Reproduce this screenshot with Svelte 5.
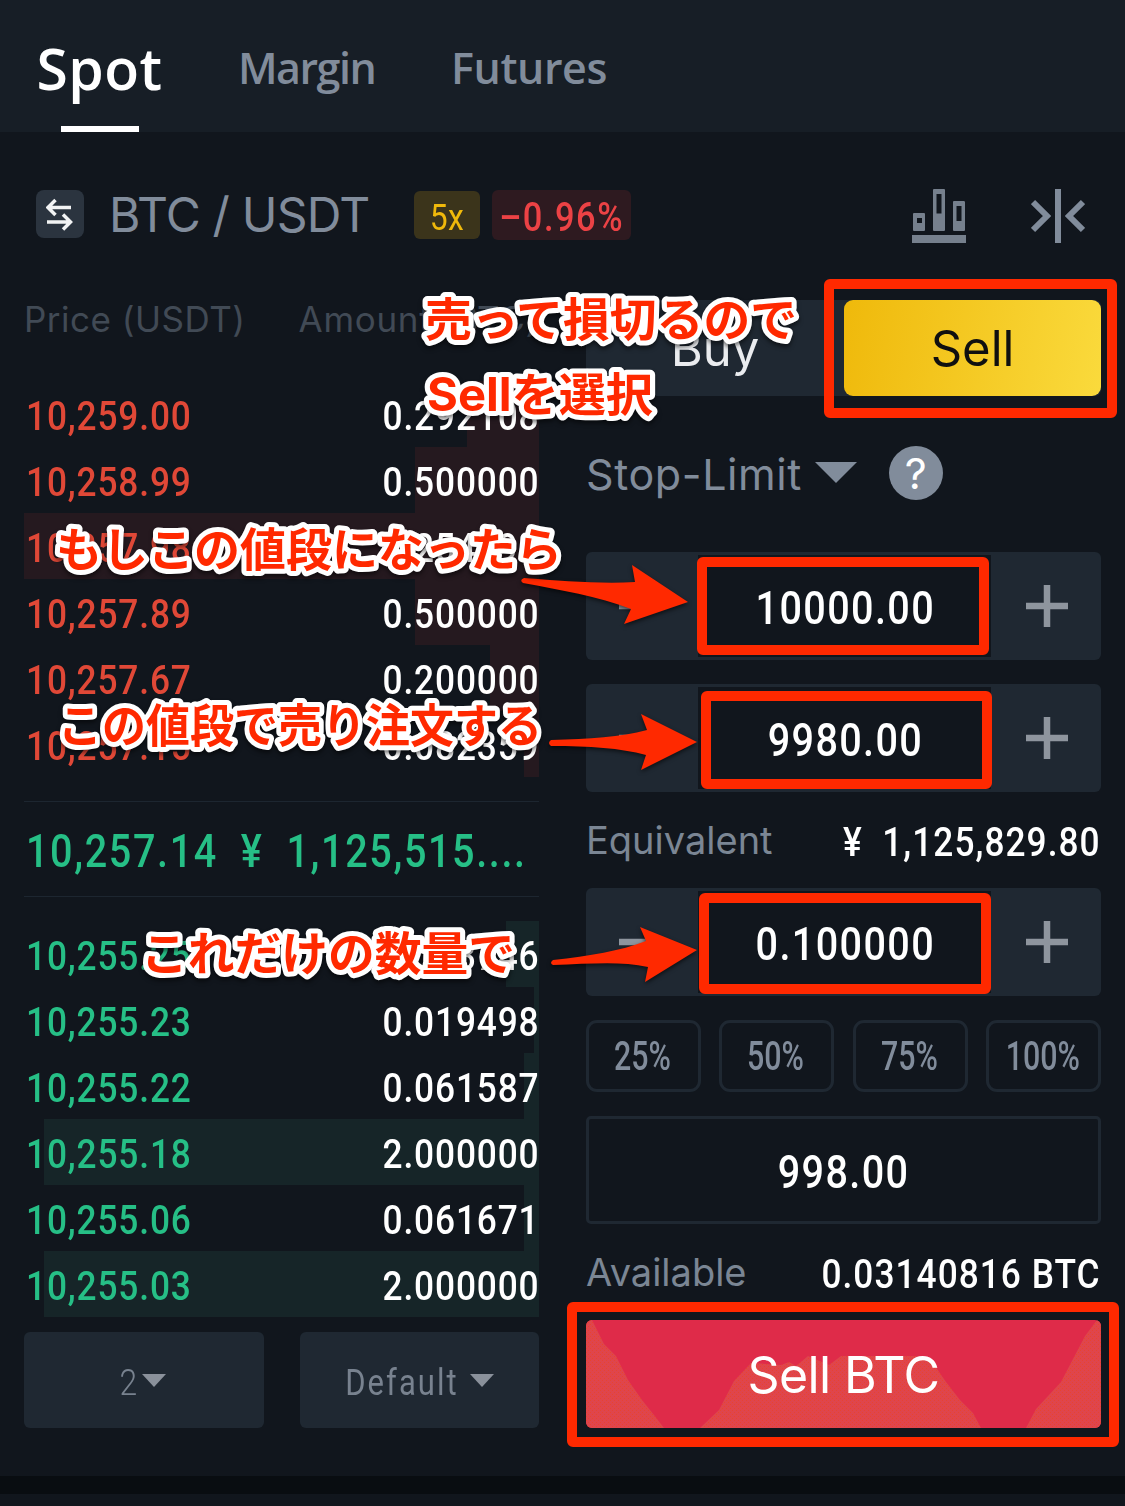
<script lang="ts">
interface Order {
  price: string;
  amount: string;
  depth: number;
}

const asks: Order[] = [
  { price: "10,259.00", amount: "0.292108", depth: 14 },
  { price: "10,258.99", amount: "0.500000", depth: 24.1 },
  { price: "10,257.98", amount: "2.254491", depth: 100 },
  { price: "10,257.89", amount: "0.500000", depth: 24.1 },
  { price: "10,257.67", amount: "0.200000", depth: 9.5 },
  { price: "10,257.15", amount: "0.082359", depth: 2.9 },
];

const bids: Order[] = [
  { price: "10,255.25", amount: "0.133746", depth: 6.4 },
  { price: "10,255.23", amount: "0.019498", depth: 1 },
  { price: "10,255.22", amount: "0.061587", depth: 2.9 },
  { price: "10,255.18", amount: "2.000000", depth: 96.1 },
  { price: "10,255.06", amount: "0.061671", depth: 2.9 },
  { price: "10,255.03", amount: "2.000000", depth: 96.1 },
];

const percents = ["25%", "50%", "75%", "100%"];

let stopPrice = $state("10000.00");
let limitPrice = $state("9980.00");
let quantity = $state("0.100000");

const notes = [
  { text: "売って損切るので", x: 425, y: 336, width: 372 },
  { text: "Sellを選択", x: 427, y: 411, width: 226 },
  { text: "もしこの値段になったら", x: 56, y: 566, width: 506 },
  { text: "この値段で売り注文する", x: 58, y: 742, width: 484 },
  { text: "これだけの数量で", x: 141, y: 970, width: 374 },
];

const frames = [
  { x: 829, y: 284, w: 283, h: 129 },
  { x: 702, y: 562, w: 282, h: 88 },
  { x: 706, y: 696, w: 281, h: 88 },
  { x: 704, y: 898, w: 282, h: 91 },
  { x: 572, y: 1307, w: 542, h: 135 },
];

const arrows = [
  "M524 578C562 581 602 584 635 582L632 565L688 602L624 624L631 609C598 596 560 590 523 583Q519 580 524 578Z",
  "M551 740C590 739 620 737 647 730L641 714L697 742L641 770L646 755C620 748 590 746 551 746Q547 743 551 740Z",
  "M553 960C590 956 620 951 646 941L640 927L697 950L645 982L648 967C620 961 590 964 553 965Q549 963 553 960Z",
];
</script>

{#snippet orders(list: Order[], side: string)}
  <div class="orders {side}">
    {#each list as order (order.price)}
      <div class="order">
        <div class="depth" style="width: {order.depth}%"></div>
        <span class="num price">{order.price}</span>
        <span class="num amount">{order.amount}</span>
      </div>
    {/each}
  </div>
{/snippet}

{#snippet stepper(value: string)}
  <div class="stepper">
    <button class="step" aria-label="minus">
      <svg width="42" height="42"><path d="M0 21H42" /></svg>
    </button>
    <div class="value"><span class="num">{value}</span></div>
    <button class="step" aria-label="plus">
      <svg width="42" height="42"><path d="M0 21H42M21 0V42" /></svg>
    </button>
  </div>
{/snippet}

<main class="screen">
  <nav class="tabs">
    <span class="tab active">Spot</span>
    <span class="tab margin">Margin</span>
    <span class="tab futures">Futures</span>
  </nav>

  <header class="pair">
    <span class="swap">
      <svg width="28" height="38" viewBox="0 0 28 38">
        <path d="M25 12.500H2M9.500 5L2 12.500L9.500 20M1 27H25M17 19.500L24.500 27L17 34.500" />
      </svg>
    </span>
    <span class="pair-name">BTC / USDT</span>
    <span class="leverage"><span class="num">5x</span></span>
    <span class="change"><span class="num">–0.96%</span></span>
    <svg class="chart-icon" width="54" height="54" viewBox="0 0 54 54">
      <path
        fill-rule="evenodd"
        d="M0 46H54V54H0ZM3 24H12Q13 24 13 25V41Q13 42 12 42H2Q1 42 1 41V25Q1 24 2 24ZM5 29V34H10V29ZM22 0H32Q33 0 33 1V41Q33 42 32 42H22Q21 42 21 41V1Q21 0 22 0ZM24.500 5V24.500H29.500V5ZM42 12H51.500Q53 12 53 13V41Q53 42 52 42H42Q41 42 41 41V13Q41 12 42 12ZM44.500 17V32H49.500V17Z"
      />
    </svg>
    <svg class="collapse-icon" width="54" height="54" viewBox="0 0 54 54">
      <path d="M27 0V54M2 13L16 27L2 41M52 13L38 27L52 41" />
    </svg>
  </header>

  <div class="columns">
    <section class="book">
      <div class="book-head">
        <span>Price (USDT)</span>
        <span>Amount (BTC)</span>
      </div>
      {@render orders(asks, "ask")}
      <div class="last"><span class="num">10,257.14&nbsp; ¥&nbsp; 1,125,515....</span></div>
      {@render orders(bids, "bid")}
      <div class="selects">
        <button class="select"><span class="num">2</span><i class="caret"></i></button>
        <button class="select"><span class="num default">Default</span><i class="caret"></i></button>
      </div>
    </section>

    <section class="form">
      <div class="sides">
        <button class="buy">Buy</button>
        <button class="sell">Sell</button>
      </div>
      <div class="type">
        <span>Stop-Limit</span>
        <i class="caret big"></i>
        <span class="help"><span>?</span></span>
      </div>
      {@render stepper(stopPrice)}
      {@render stepper(limitPrice)}
      <div class="info equivalent">
        <span>Equivalent</span>
        <span class="num">¥&nbsp; 1,125,829.80</span>
      </div>
      {@render stepper(quantity)}
      <div class="percents">
        {#each percents as percent (percent)}
          <button class="percent"><span class="num">{percent}</span></button>
        {/each}
      </div>
      <div class="total"><span class="num">998.00</span></div>
      <div class="info available">
        <span>Available</span>
        <span class="num">0.03140816 BTC</span>
      </div>
      <button class="submit">
        <svg width="515" height="108" viewBox="0 0 515 108">
          <defs>
            <pattern id="dots" width="4" height="4" patternUnits="userSpaceOnUse">
              <rect width="4" height="4" fill="#df454c" />
              <path d="M0 0H1V1H0ZM2 2H3V3H2Z" fill="#e8432f" />
            </pattern>
          </defs>
          <path
            fill="url(#dots)"
            d="M0 0H6L18 24L30 36L42 60L56 80L68 95L78 108H0ZM114 108L133 90L148 61L165 43L195 45L203 42L210 46L222 36L243 45L255 36L330 36L347 43L360 62L374 80L387 93L395 108ZM440 108L450 89L475 62L499 16L511 0H515V108Z"
          />
        </svg>
        <span>Sell BTC</span>
      </button>
    </section>
  </div>

  <footer class="divider"></footer>

  <svg class="annotations" width="1125" height="1506" viewBox="0 0 1125 1506">
    {#each frames as f}
      <rect x={f.x} y={f.y} width={f.w} height={f.h} rx="1" />
    {/each}
    {#each arrows as d}
      <path {d} />
    {/each}
    {#each notes as note}
      <text x={note.x} y={note.y} textLength={note.width} lengthAdjust="spacingAndGlyphs">{note.text}</text>
    {/each}
  </svg>
</main>

<style>
:global(body) {
  background: #11161d;
}

.screen {
  position: relative;
  box-sizing: border-box;
  width: 1125px;
  height: 1506px;
  overflow: hidden;
  background: #11161d;
  color: #fff;
  font-family: Inter, "Noto Sans CJK JP", sans-serif;
}

.screen :global(*) {
  box-sizing: border-box;
}

button {
  border: 0;
  padding: 0;
  background: none;
  color: inherit;
  font: inherit;
}

svg {
  display: block;
  flex: none;
}

.num {
  display: inline-block;
  font-family: Roboto, sans-serif;
  font-size: 41px;
  font-weight: 500;
  letter-spacing: 1.2px;
  white-space: nowrap;
  transform: scaleX(0.86);
}

.tabs {
  display: flex;
  height: 132px;
  padding-left: 37px;
  background: #171e26;
  color: #818c9b;
  font-family: "Open Sans", sans-serif;
  font-weight: 600;
}

.tab {
  font-size: 43px;
  line-height: 135px;
  white-space: nowrap;
}

.tab.active {
  display: flex;
  flex-direction: column;
  align-items: center;
  width: 125px;
  height: 132px;
  padding-top: 10px;
  color: #fff;
  font-size: 57px;
  letter-spacing: 0.5px;
  line-height: 116px;
}

.tab.active::after {
  content: "";
  width: 78px;
  height: 6px;
  background: #fff;
}

.tab.margin {
  width: 213px;
  margin-left: 76px;
  letter-spacing: -1.5px;
}

.tab.futures {
  letter-spacing: -0.4px;
}

.pair {
  display: flex;
  align-items: center;
  height: 168px;
  padding: 0 40px 0 36px;
}

.swap {
  display: grid;
  place-items: center;
  width: 48px;
  height: 48px;
  margin-bottom: 4px;
  border-radius: 8px;
  background: #2b343f;
}

.swap path {
  fill: none;
  stroke: #f2f3f4;
  stroke-width: 3.5;
}

.pair-name {
  width: 305px;
  margin: 0 0 3px 25px;
  color: #818c9b;
  font-size: 48px;
  letter-spacing: -0.8px;
  white-space: nowrap;
}

.leverage,
.change {
  display: grid;
  place-items: center;
  width: 66px;
  height: 48px;
  margin-bottom: 2px;
  padding-top: 4px;
  border-radius: 6px;
  background: #3b341b;
  color: #f0b90b;
}

.leverage .num {
  font-size: 37px;
  font-weight: 400;
  letter-spacing: 0.5px;
}

.change {
  width: 139px;
  height: 50px;
  margin-left: 12px;
  background: #2e1a20;
  color: #ec4245;
}

.change .num {
  margin: 0 -10px;
  font-size: 40px;
  font-weight: 500;
  letter-spacing: 1.8px;
}

.chart-icon {
  margin-left: auto;
}

.chart-icon path {
  fill: #76808d;
}

.collapse-icon {
  margin-left: 65px;
}

.collapse-icon path {
  fill: none;
  stroke: #818c9b;
  stroke-width: 6;
}

.columns {
  display: grid;
  grid-template-columns: 515px 515px;
  gap: 47px;
  height: 1176px;
  padding: 0 24px;
}

.book-head {
  display: flex;
  justify-content: space-between;
  height: 81px;
  color: #414a55;
  font-size: 35px;
  line-height: 38px;
  letter-spacing: 0.5px;
}

.book-head span:last-child {
  letter-spacing: 0.7px;
}

.order {
  position: relative;
  display: flex;
  align-items: center;
  justify-content: space-between;
  height: 66px;
  padding: 4px 0 0 2px;
}

.depth {
  position: absolute;
  top: 0;
  right: 0;
  height: 100%;
}

.ask .depth {
  background: #25191f;
}

.bid .depth {
  background: #162528;
}

.price {
  position: relative;
  letter-spacing: 1px;
  transform-origin: left;
}

.ask .price {
  color: #e04837;
}

.bid .price {
  color: #26bf86;
}

.amount {
  position: relative;
  margin-right: -1px;
  letter-spacing: 1px;
  transform-origin: right;
}

.last {
  display: flex;
  align-items: center;
  height: 96px;
  margin: 24px 0;
  padding: 4px 0 0 2px;
  border: solid #1d2630;
  border-width: 1px 0;
  color: #26bf86;
}

.last .num {
  font-size: 46px;
  letter-spacing: 1.9px;
  transform-origin: left;
}

.selects {
  display: grid;
  grid-template-columns: 240px 239px;
  gap: 36px;
  margin-top: 15px;
}

.select {
  display: flex;
  align-items: center;
  justify-content: center;
  height: 96px;
  border-radius: 6px;
  background: #1f2832;
  color: #78828f;
}

.select .num {
  margin: 5px 2px 0 -4px;
  font-size: 37px;
  font-weight: 300;
}

.select .default {
  margin-left: -10px;
  font-size: 36px;
  font-weight: 400;
  letter-spacing: 2.4px;
}

.caret {
  border: 12px solid transparent;
  border-top: 13px solid #8a919b;
  border-bottom: 0;
}

.form {
  display: flex;
  flex-direction: column;
}

.sides {
  display: flex;
  height: 96px;
  border-radius: 6px;
  background: #1f2832;
  font-size: 49px;
  letter-spacing: -1px;
}

.buy {
  width: 258px;
  color: #eaecef;
}

.sell {
  width: 257px;
  border-radius: 9px;
  background: linear-gradient(100deg, #efb90b, #fada3c);
  color: #101010;
}

.type {
  display: flex;
  align-items: center;
  height: 156px;
  color: #818c9b;
  font-size: 43px;
  letter-spacing: 0.6px;
}

.caret.big {
  margin: 0 32px 3px 13px;
  border: 21px solid transparent;
  border-top: 21px solid #818c9b;
  border-bottom: 0;
}

.help {
  display: grid;
  place-items: center;
  width: 54px;
  height: 54px;
  margin-bottom: 2px;
  border-radius: 50%;
  background: #818c9b;
  color: #fff;
  font-size: 43px;
}

.stepper {
  display: flex;
  align-items: center;
  height: 108px;
  border-radius: 6px;
  background: #1f2832;
}

.stepper + .stepper {
  margin-top: 24px;
}

.step {
  display: grid;
  flex: 1;
  place-items: center;
}

.step:first-child {
  padding-right: 4px;
}

.step:last-child {
  padding-left: 2px;
}

.step path {
  stroke: #8e959e;
  stroke-width: 6.5;
}

.value {
  display: grid;
  place-items: center;
  width: 293px;
  height: 102px;
  padding: 3px 0 0 1px;
  background: #11161d;
}

.value .num,
.total .num {
  font-size: 46px;
  letter-spacing: 1.6px;
}

.info {
  display: flex;
  align-items: center;
  justify-content: space-between;
  height: 96px;
  color: #7b8694;
  font-size: 38px;
}

.info .num {
  margin-top: 4px;
  color: #fff;
  transform-origin: right;
}

.percents {
  display: grid;
  grid-template-columns: repeat(4, 115px);
  justify-content: space-between;
  margin: 24px 0;
}

.percent {
  height: 72px;
  border: 3px solid #1f2832;
  border-radius: 11px;
  color: #818c9b;
}

.percent .num {
  margin: 1px -10px 0 -12px;
  font-size: 40px;
  font-weight: 500;
  letter-spacing: 0;
  transform: scaleX(0.76);
}

.total {
  display: grid;
  place-items: center;
  height: 108px;
  padding-top: 3px;
  border: 3px solid #1f2832;
  border-radius: 5px;
}

.submit {
  display: grid;
  place-items: center;
  height: 108px;
  overflow: hidden;
  border-radius: 6px;
  background: #df2b49;
  font-size: 50px;
  letter-spacing: -0.6px;
}

.submit > * {
  grid-area: 1 / 1;
}

.submit span {
  position: relative;
  margin-top: 2px;
}

.divider {
  height: 18px;
  background: #090d11;
}

.annotations {
  position: absolute;
  top: 0;
  left: 0;
  pointer-events: none;
}

.annotations rect {
  fill: none;
  stroke: #ff2900;
  stroke-width: 10;
  stroke-linejoin: round;
}

.annotations path {
  fill: #ff2900;
  filter: drop-shadow(0 2px 2px rgba(0, 0, 0, 0.6));
}

.annotations text {
  fill: #ff2900;
  stroke: #fff;
  stroke-width: 10;
  stroke-linejoin: round;
  paint-order: stroke;
  font-family: Inter, "Noto Sans CJK JP", sans-serif;
  font-size: 46px;
  font-weight: 700;
  filter: drop-shadow(0 3px 2px rgba(0, 0, 0, 0.5));
}
</style>
